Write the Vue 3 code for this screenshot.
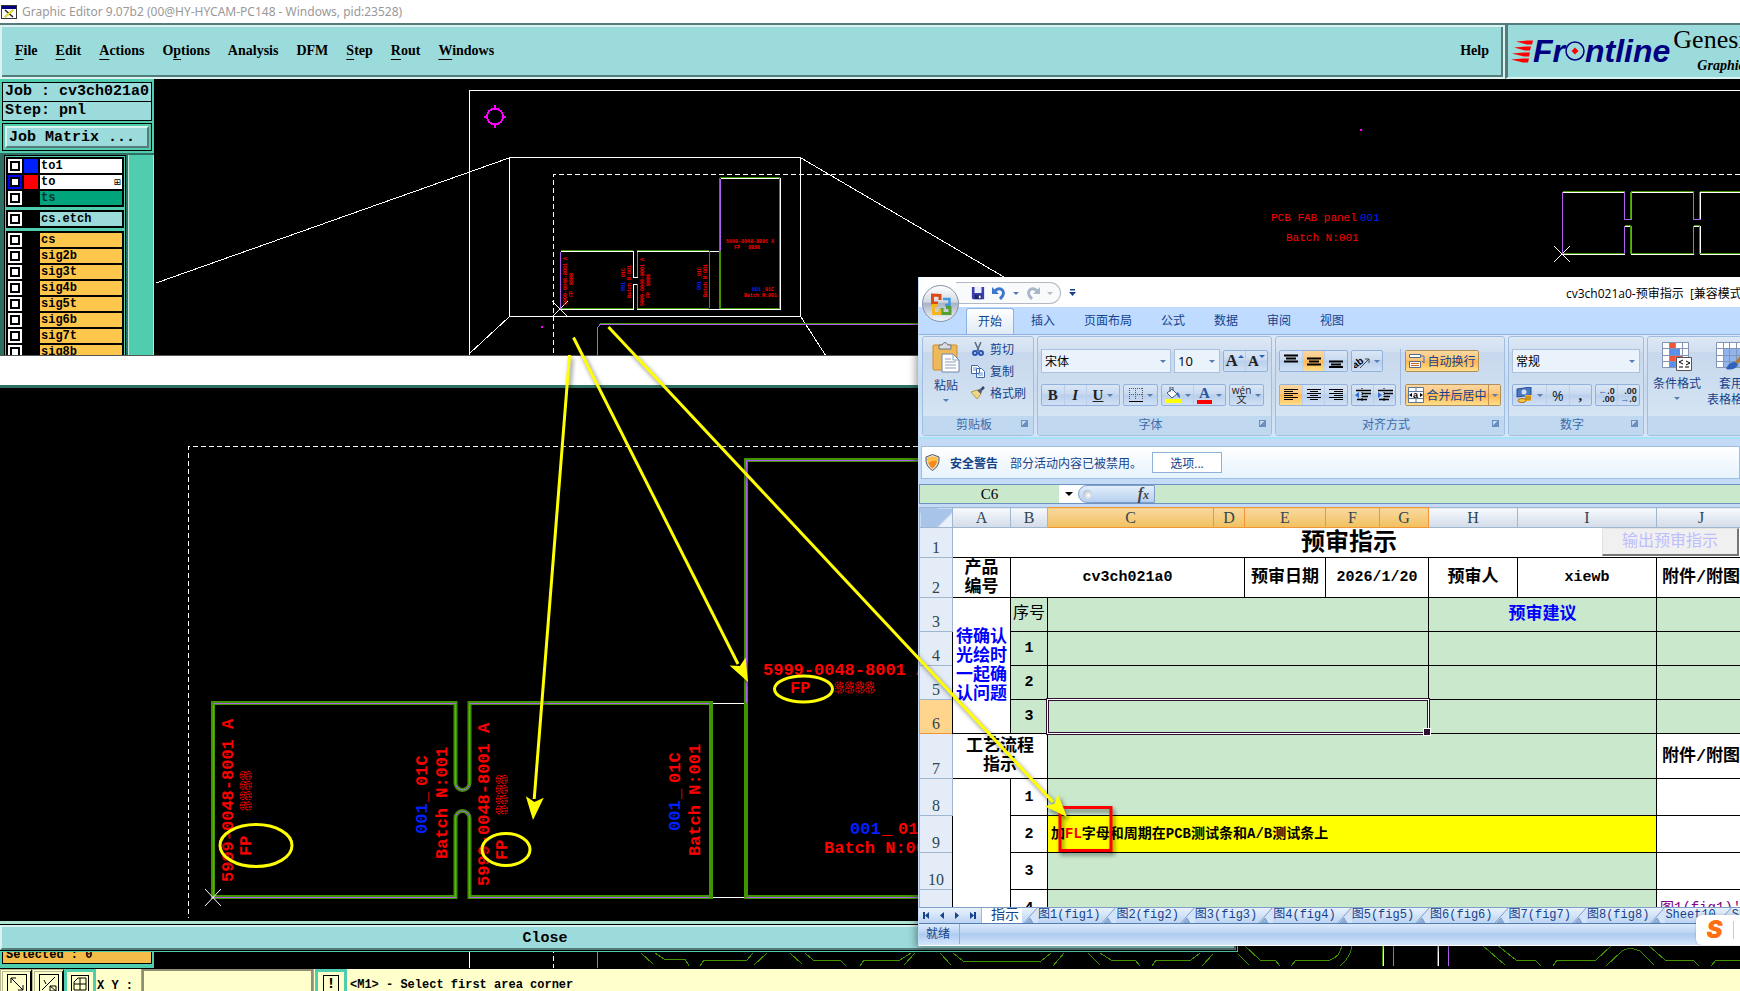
<script setup>
import { ref } from 'vue';

const menus = [
    { key: 'F', rest: 'ile' },
    { key: 'E', rest: 'dit' },
    { key: 'A', rest: 'ctions' },
    { pre: 'O', key: 'p', rest: 'tions' },
    { rest: 'Analysis' },
    { rest: 'DFM' },
    { key: 'S', rest: 'tep' },
    { key: 'R', rest: 'out' },
    { key: 'W', rest: 'indows' },
];

const layerGroups = ref([
    [
        { name: 'to1', type: 'white', color: 'blue' },
        { name: 'to', type: 'white', color: 'red', current: true },
        { name: 'ts', type: 'mask' },
    ],
    [{ name: 'cs.etch', type: 'rout' }],
    [
        { name: 'cs', type: 'signal' },
        { name: 'sig2b', type: 'signal' },
        { name: 'sig3t', type: 'signal' },
        { name: 'sig4b', type: 'signal' },
        { name: 'sig5t', type: 'signal' },
        { name: 'sig6b', type: 'signal' },
        { name: 'sig7t', type: 'signal' },
        { name: 'sig8b', type: 'signal' },
    ],
]);

const bookName = 'cv3ch021a0-预审指示  [兼容模式] - Microsoft Excel';
const ribbonTabs = ['开始', '插入', '页面布局', '公式', '数据', '审阅', '视图'];
const activeTab = ref('开始');

const columns = [
    { name: 'A', cls: 'w-a' },
    { name: 'B', cls: 'w-b' },
    { name: 'C', cls: 'w-c', on: true },
    { name: 'D', cls: 'w-d', on: true },
    { name: 'E', cls: 'w-e', on: true },
    { name: 'F', cls: 'w-f', on: true },
    { name: 'G', cls: 'w-g', on: true },
    { name: 'H', cls: 'w-h' },
    { name: 'I', cls: 'w-i' },
    { name: 'J', cls: 'w-j' },
];

const sheets = ['图1(fig1)', '图2(fig2)', '图3(fig3)', '图4(fig4)', '图5(fig5)', '图6(fig6)', '图7(fig7)', '图8(fig8)', 'Sheet10', 'Sheet11'];

const coord = ref('');
</script>

<template>
    <div class="desktop">
        <!-- Graphic Editor -->
        <div class="titlebar">
            <svg class="app-icon" width="16" height="16" viewBox="0 0 16 16">
                <rect x="0.5" y="1.5" width="15" height="13" fill="#fff" stroke="#333" />
                <rect x="1" y="2" width="14" height="3" fill="#000080" />
                <path d="M4 6l8 7M12 6l-8 7" stroke="#222" stroke-width="1.5" />
                <path d="M4 13l8-7" stroke="#e8e020" stroke-width="2" />
            </svg>
            <span>Graphic Editor 9.07b2 (00@HY-HYCAM-PC148 - Windows, pid:23528)</span>
        </div>
        <header class="header">
            <nav class="menubar">
                <button v-for="m in menus" :key="m.rest" class="menu">{{ m.pre }}<u v-if="m.key">{{ m.key }}</u>{{ m.rest }}</button>
                <button class="menu help">Help</button>
            </nav>
            <div class="brand">
                <div class="logo">
                    <svg class="streaks" width="22" height="24" viewBox="0 0 22 24">
                        <path d="M5 2.500l12-1h5l-1 4h-5zM3 8.500l12-1h5l-1 4h-5zM1 14.500l12-1h6l-1 4h-5zM0 20.500l12-1h6l-1 4h-5z" fill="#f00" />
                    </svg>
                    <span>Fr</span>
                    <svg width="20" height="20" viewBox="0 0 20 20">
                        <circle cx="10" cy="10" r="9" fill="#9cdbdb" stroke="#000080" stroke-width="1.500" />
                        <path d="M10 2v16M2 10h16" stroke="#b9c8d8" />
                        <path d="M10 6.500l3.500 3.500l-3.500 3.500l-3.500-3.500z" fill="#f00" />
                    </svg>
                    <span>ntline</span>
                </div>
                <div class="product">
                    <div class="product-name">Genesis 2000</div>
                    <div class="product-sub">Graphic Editor</div>
                </div>
            </div>
        </header>

        <div class="work">
            <aside class="sidebar">
                <div class="info">
                    <div>Job : cv3ch021a0</div>
                    <div>Step: pnl</div>
                </div>
                <div class="matrix"><button>Job Matrix ...</button></div>
                <div class="layers">
                    <div class="layer-list">
                        <div v-for="(group, i) in layerGroups" :key="i" class="layer-group">
                            <label v-for="layer in group" :key="layer.name" class="layer">
                                <input type="checkbox" :class="{ current: layer.current }">
                                <span class="swatch" :class="layer.color"></span>
                                <span class="layer-name" :class="layer.type">{{ layer.name }}<i v-if="layer.current">⊞</i></span>
                            </label>
                        </div>
                    </div>
                    <div class="scroller"></div>
                </div>
                <div class="selected"><span>Selected : 0</span></div>
            </aside>
            <main class="canvas">
                <svg viewBox="154 79 1586 889" preserveAspectRatio="xMinYMin slice" shape-rendering="crispEdges" fill="none">
                    <g stroke="#fff">
                        <path d="M1740 90.500H469.500V968" />
                        <path d="M509.500 157.500h291v159h-291z" />
                        <path d="M156 283L509 158M801 158L1004 277M509 317L469 354M801 317L826 356" />
                        <path d="M1740 174.500H553.500V968" stroke-dasharray="5 3" />
                        <path d="M561 251.500h72v26h4v-26h83M561 309.500h72v-25h4v25h143.500v-131h-60" />
                        <path d="M552 301l16 16M568 301l-16 16" />
                    </g>
                    <g stroke="#3f9400">
                        <path d="M561 250.500h72M637 250.500h72M561 308.500h72M637 308.500h72M720 177.500h60M720 308.500h60M709.500 251v57M719.500 178v131M720.500 251v58M779.500 178v131" />
                        <path d="M600 323.500H930" />
                    </g>
                    <g stroke="#b060f0">
                        <path d="M560.500 252v57M637.500 252v25M637.500 284v25M720.500 179v72" />
                        <path d="M930 324.500H600L597.500 328V968" />
                    </g>
                    <g fill="#f0f">
                        <rect x="541" y="326" width="2" height="2" />
                        <rect x="1360" y="129" width="2" height="2" />
                    </g>
                    <path d="M495 105v4M495 124v4M484 116.500h4M502 116.500h4" stroke="#f0f" stroke-width="2" />
                    <circle cx="495" cy="116.500" r="8" stroke="#f0f" stroke-width="2" />

                    <!-- coupon texts -->
                    <g class="tiny">
                        <g transform="translate(567 305) rotate(-90)"><text>5999-0048-8001 A</text><text x="8" y="6">FP</text><text x="20" y="6">8888</text></g>
                        <g transform="translate(625 291) rotate(-90)"><text class="no">001</text><text x="11">_01C</text><text x="-7" y="6">Batch N:001</text></g>
                        <g transform="translate(644 306) rotate(-90)"><text>5999-0048-8001 A</text><text x="8" y="6">FP</text><text x="20" y="6">8888</text></g>
                        <g transform="translate(701 290) rotate(-90)"><text class="no">001</text><text x="11">_01C</text><text x="-7" y="6">Batch N:001</text></g>
                        <text x="726" y="243">5999-0048-8001 A</text>
                        <text x="734" y="249">FP</text><text x="748" y="249">8888</text>
                        <text class="no" x="752" y="291">001</text><text x="762" y="291">_01C</text>
                        <text x="744" y="297">Batch N:001</text>
                    </g>
                    <g class="panel-text">
                        <text x="1271" y="221">PCB FAB panel</text>
                        <text x="1360" y="221" class="no">001</text>
                        <text x="1286" y="241">Batch N:001</text>
                    </g>

                    <!-- right coupons -->
                    <g stroke="#fff">
                        <path d="M1563 192.500h62M1631 192.500h63M1700 192.500h40M1563 254.500h62M1631 254.500h63M1700 254.500h40M1625 226.500h6M1694 226.500h6M1700.500 193v27M1700.500 226v28" />
                        <path d="M1554 246l16 16M1570 246l-16 16" />
                    </g>
                    <g stroke="#3f9400">
                        <path d="M1563 191.500h62M1631 191.500h63M1700 191.500h40M1563 253.500h62M1631 253.500h63M1700 253.500h40M1625 225.500h6M1694 225.500h6M1630.500 192v28M1630.500 226v28M1699.500 192v28M1699.500 226v28" />
                    </g>
                    <g stroke="#b060f0">
                        <path d="M1562.500 192v62M1624.500 192v27.500h7V192M1624.500 254v-28M1631.500 254v-28M1693.500 192v27.500h7M1693.500 254v-28" />
                    </g>

                    <!-- traces along the lower edge -->
                    <g stroke="#3f9400">
                        <path d="M641 953l12 11M655 953l9 6h21l4 7M700 966l4-6h43l6-7M767 953l-13 12M790 953l12 11M805 953l8 7h27l6 6M860 966l4-6h36l11-7M915 953l-11 12" />
                        <path d="M940 953l11 12M953 953l10 8h78l10-8M1064 953l-11 13M1088 953l12 12M1100 953l11 7h24l5 6M1152 966l4-6h35l9-7M1213 954l-11 12M1238 954l11 11M1244 945l16 15h15l5 6M1291 966l5-6h34q10-3 12-15" />
                        <path d="M1352 945q-1 12-12 21M1482 945l23 20M1497 945l19 15h19l6 6M1553 966l4-6h39l16-15M1606 966l16-15q8-5 18 0l14 14M1648 945l17 15h28l6 6M1711 966l5-6h24M1382.500 940v26M1437.500 940v26" />
                    </g>
                    <path d="M1383.500 940v26M1438.500 940v26" stroke="#fff" />
                    <path d="M1393.500 940v26M1448.500 940v26" stroke="#b060f0" />
                </svg>
            </main>
        </div>

        <footer class="status">
            <button class="tool" aria-label="Measure">
                <svg width="20" height="20" viewBox="0 0 20 20"><rect x="0.500" y="0.500" width="19" height="19" /><path d="M4 4l12 12M4 9V4h5M11 16h5v-5" /></svg>
            </button>
            <button class="tool" aria-label="Units">
                <svg width="20" height="20" viewBox="0 0 20 20"><rect x="0.500" y="0.500" width="19" height="19" /><path d="M3 16L16 3M5 6l2 4M11 12h6v5h-6zM11 12l6 5" /></svg>
            </button>
            <button class="tool teal" aria-label="Grid">
                <svg width="18" height="18" viewBox="0 0 18 18"><rect x="0.500" y="0.500" width="17" height="17" /><path d="M3 15V7l4-4h8v12zM3 9h12M9 3v12" /></svg>
            </button>
            <label class="xy" for="xy">X Y :</label>
            <input id="xy" v-model="coord" type="text">
            <button class="tool teal alert" aria-label="Alert"><span>!</span></button>
            <span class="hint">&lt;M1&gt; - Select first area corner</span>
        </footer>

        <!-- zoom window -->
        <section class="popup">
            <div class="popup-gap"></div>
            <div class="popup-view">
                <svg viewBox="0 388 1238 533" preserveAspectRatio="xMinYMin slice" fill="none">
                    <path d="M1238 446.500H188.500V918" stroke="#fff" stroke-dasharray="5 3" shape-rendering="crispEdges" />
                    <path d="M711 703.500h35M711 897.500h35" stroke="#fff" shape-rendering="crispEdges" />
                    <path d="M213 703H455.500V783a7 7 0 0 0 14 0V703H711V897H469.500V818a7 7 0 0 0 -14 0V897H213z" stroke="#3f9400" stroke-width="4" />
                    <path d="M1238 460H746V897H1238" stroke="#3f9400" stroke-width="4" />
                    <path d="M710 703.500H469.500V783a7 7 0 0 1 -14 0V703.500H213.500V897.500H455.500V818a7 7 0 0 1 14 0V897.500H710" stroke="#b060f0" />
                    <path d="M1238 460.500H746.500V703M746 897.500H1238" stroke="#b060f0" />
                    <path d="M205 889l16 17M221 889l-16 17" stroke="#fff" />
                    <g class="board-text">
                        <g transform="translate(233 882) rotate(-90)"><text>5999-0048-8001 A</text><text x="26" y="18">FP</text><text class="dotted" x="71" y="18">8888</text></g>
                        <g transform="translate(427 834) rotate(-90)"><text class="no">001</text><text x="32">_</text><text x="48">01C</text><text x="-25" y="20">Batch N:001</text></g>
                        <g transform="translate(489 886) rotate(-90)"><text>5999-0048-8001 A</text><text x="26" y="18">FP</text><text class="dotted" x="71" y="18">8888</text></g>
                        <g transform="translate(680 831) rotate(-90)"><text class="no">001</text><text x="32">_</text><text x="48">01C</text><text x="-25" y="20">Batch N:001</text></g>
                        <text x="763" y="675">5999-0048-8001 A</text>
                        <text x="790" y="693">FP</text><text class="dotted" x="834" y="693">8888</text>
                        <text class="no" x="850" y="834">001</text><text x="882" y="834">_</text><text x="898" y="834">01C</text>
                        <text x="824" y="853">Batch N:001</text>
                    </g>
                </svg>
            </div>
            <button class="close">Close</button>
        </section>

        <!-- Excel -->
        <section class="excel">
            <div class="x-title">
                <button class="orb" aria-label="Office">
                    <svg width="22" height="24" viewBox="0 0 22 24" fill="none" stroke-width="3">
                        <path d="M10 8V3.500L2.500 3V11H8" stroke="#dd4a12" />
                        <path d="M13 7h6.500v6H15" stroke="#3f97e0" stroke-width="2.500" />
                        <path d="M12 16v5.500h8V15.500h-4" stroke="#55a030" />
                        <path d="M8 13.500H3.500v8H10V17" stroke="#f5b51d" />
                    </svg>
                </button>
                <div class="qat">
                    <svg width="14" height="14" viewBox="0 0 16 16"><path d="M1 1h14v14H2l-1-1z" fill="#3a3fb0" /><path d="M4 1h8v7H4z" fill="#e9eefa" /><path d="M4 10h8v5H4z" fill="#23276e" /><path d="M9 11h2v3H9z" fill="#fff" /></svg>
                    <svg width="14" height="14" viewBox="0 0 14 14" fill="none"><path d="M3 5c5-6 13 1 5 8" stroke="#3d76cf" stroke-width="3" /><path d="M0 1v7h7z" fill="#3d76cf" /></svg>
                    <i class="caret"></i>
                    <svg width="14" height="14" viewBox="0 0 14 14" fill="none"><path d="M11 5C6-1-2 6 6 13" stroke="#aab7c9" stroke-width="3" /><path d="M14 1v7H7z" fill="#aab7c9" /></svg>
                    <i class="caret dim"></i>
                </div>
                <svg class="qat-more" width="7" height="8" viewBox="0 0 7 8"><path d="M1 0h5v1.500H1zM0 3h7L3.500 7z" fill="#15428b" /></svg>
                <span class="x-name">{{ bookName }}</span>
            </div>
            <nav class="x-tabs">
                <button v-for="t in ribbonTabs" :key="t" :class="{ active: activeTab === t }" @click="activeTab = t">{{ t }}</button>
            </nav>

            <div class="ribbon">
                <div class="group">
                    <div class="group-body clip">
                        <button class="big">
                            <svg width="28" height="31" viewBox="0 0 28 31">
                                <rect x="1" y="3" width="24" height="25" rx="1" fill="#eeb95b" stroke="#c98f2e" />
                                <path d="M7 3h3q3-5 6 0h3v4H7z" fill="#d9dde3" stroke="#6d747d" />
                                <path d="M10 12h11l6 6v12H10z" fill="#fff" stroke="#6f86a8" />
                                <path d="M21 12v6h6M13 17h6M13 20h11M13 23h11M13 26h11" stroke="#8ba0bf" fill="none" />
                            </svg>
                            <span>粘贴</span>
                            <i class="caret"></i>
                        </button>
                        <div class="stack">
                            <button><svg width="14" height="14" viewBox="0 0 14 14" fill="none"><path d="M4 0l4 9M10 0L6 9" stroke="#5b6b86" stroke-width="1.500" /><circle cx="4" cy="11" r="2" stroke="#2a55b5" stroke-width="2" /><circle cx="10" cy="11" r="2" stroke="#2a55b5" stroke-width="2" /></svg>剪切</button>
                            <button><svg width="14" height="14" viewBox="0 0 14 14"><path d="M0.500 1.500h6l2 2v6h-8zM5.500 4.500h5l3 3v6h-8z" fill="#fff" stroke="#3c66b0" /><path d="M2 4h4M2 6h3M7 9h5M7 11h5" stroke="#6d92cf" /></svg>复制</button>
                            <button><svg width="14" height="14" viewBox="0 0 14 14"><path d="M0 6l6-2 4 4-4 5z" fill="#ecd689" stroke="#b59b45" /><path d="M6 4l3-1 2 2-1 3z" fill="#4d5c77" /><path d="M10 4l3-3" stroke="#3a4762" stroke-width="2.500" /></svg>格式刷</button>
                        </div>
                    </div>
                    <div class="group-name">剪贴板<i class="launch"></i></div>
                </div>

                <div class="group">
                    <div class="group-body rows">
                        <div class="row">
                            <select class="font-name" aria-label="字体"><option>宋体</option></select>
                            <select class="font-size" aria-label="字号"><option>10</option></select>
                            <div class="btns push">
                                <button class="serif"><b class="grow">A</b><i class="up"></i></button>
                                <button class="serif"><b>A</b><i class="down"></i></button>
                            </div>
                        </div>
                        <div class="row">
                            <div class="btns biu">
                                <button class="serif"><b>B</b></button>
                                <button class="serif"><b><em>I</em></b></button>
                                <button class="serif wide"><b><u>U</u></b><i class="caret"></i></button>
                            </div>
                            <div class="btns">
                                <button class="wide"><svg width="14" height="14" viewBox="0 0 14 14"><path d="M0.500 0v12M6.500 0v12M13.500 0v12M0 0.500h14M0 6.500h14" stroke="#555" stroke-dasharray="1 1" /><path d="M0 13.500h14" stroke="#000" /></svg><i class="caret"></i></button>
                            </div>
                            <div class="btns fill">
                                <button><svg width="16" height="16" viewBox="0 0 16 16"><path d="M2 6l5-4 5 5-5 4z" fill="#fff" stroke="#46597c" /><path d="M5 5V0h3v4" fill="none" stroke="#46597c" /><path d="M12 5q3 1 3 6q-3-1-3-3z" fill="#3f6fc4" /><path d="M0 12h16v4H0z" fill="#ff0" /></svg><i class="caret"></i></button>
                                <button class="serif"><span class="font-color">A</span><i class="caret"></i></button>
                            </div>
                            <div class="btns">
                                <button class="wide wen"><span>wén<br>文</span><i class="caret"></i></button>
                            </div>
                        </div>
                    </div>
                    <div class="group-name">字体<i class="launch"></i></div>
                </div>

                <div class="group">
                    <div class="group-body align">
                        <div class="rows">
                            <div class="row">
                                <div class="btns three">
                                    <button aria-label="top"><svg width="14" height="14" viewBox="0 0 14 14"><path d="M0 1.500h14M2 4.500h10M0 7.500h14" stroke="#000" stroke-width="2" /></svg></button>
                                    <button aria-label="middle" class="on"><svg width="14" height="14" viewBox="0 0 14 14"><path d="M0 4.500h14M2 7.500h10M0 10.500h14" stroke="#000" stroke-width="2" /></svg></button>
                                    <button aria-label="bottom"><svg width="14" height="14" viewBox="0 0 14 14"><path d="M0 7.500h14M2 10.500h10M0 13h14" stroke="#000" stroke-width="2" /></svg></button>
                                </div>
                                <div class="btns"><button class="orient"><svg width="16" height="14" viewBox="0 0 16 14"><text x="-2" y="12" transform="rotate(-38 4 9)" font-family="Liberation Sans" font-size="10" font-weight="bold">ab</text><path d="M6 14l9-9M15 9V5h-4" fill="none" stroke="#444" /></svg><i class="caret"></i></button></div>
                            </div>
                            <div class="row">
                                <div class="btns three">
                                    <button aria-label="left" class="on"><svg width="14" height="14" viewBox="0 0 14 14"><path d="M0 1.500h14M0 3.500h9M0 5.500h14M0 7.500h9M0 9.500h14M0 11.500h9" stroke="#000" /></svg></button>
                                    <button aria-label="center"><svg width="14" height="14" viewBox="0 0 14 14"><path d="M0 1.500h14M3 3.500h8M0 5.500h14M3 7.500h8M0 9.500h14M3 11.500h8" stroke="#000" /></svg></button>
                                    <button aria-label="right"><svg width="14" height="14" viewBox="0 0 14 14"><path d="M0 1.500h14M5 3.500h9M0 5.500h14M5 7.500h9M0 9.500h14M5 11.500h9" stroke="#000" /></svg></button>
                                </div>
                                <div class="btns two">
                                    <button aria-label="outdent"><svg width="16" height="14" viewBox="0 0 16 14"><path d="M1 2.500h15M7 5.500h9M7 8.500h6M2 11.500h10" stroke="#000" stroke-width="1.500" /><path d="M7 0v14" stroke="#000" stroke-dasharray="1 1" /><path d="M0 7l4-3v6z" fill="#2f6ad0" /></svg></button>
                                    <button aria-label="indent"><svg width="16" height="14" viewBox="0 0 16 14"><path d="M1 2.500h15M7 5.500h9M7 8.500h6M2 11.500h10" stroke="#000" stroke-width="1.500" /><path d="M7 0v14" stroke="#000" stroke-dasharray="1 1" /><path d="M5 7L1 4v6z" fill="#2f6ad0" /></svg></button>
                                </div>
                            </div>
                        </div>
                        <div class="sep"></div>
                        <div class="rows">
                            <div class="row">
                                <div class="btns hot"><button class="on wrap"><svg width="16" height="16" viewBox="0 0 16 16"><path d="M0.500 1.500h11v3h-11zM0.500 8.500h11v6h-11z" fill="#fff" stroke="#5a6b88" /><path d="M2 10.500h8M2 12.500h8" stroke="#c96a22" /><path d="M12 3h3v7M13 8l2 2" fill="none" stroke="#3f6fc4" /></svg>自动换行</button></div>
                            </div>
                            <div class="row">
                                <div class="btns hot merge"><button class="on"><svg width="16" height="16" viewBox="0 0 16 16"><path d="M0.500 0.500h15v15h-15zM0 4.500h16M0 11.500h16M8 0v4M8 12v4" fill="#fff" stroke="#5d7599" /><path d="M1 8l3-2v4zM15 8l-3-2v4z" fill="#000" /><text x="5" y="11" font-family="Liberation Sans" font-size="9" font-weight="bold">a</text></svg>合并后居中</button><button class="on drop" aria-label="更多"><i class="caret"></i></button></div>
                            </div>
                        </div>
                    </div>
                    <div class="group-name">对齐方式<i class="launch"></i></div>
                </div>

                <div class="group">
                    <div class="group-body rows">
                        <div class="row"><select class="num-format" aria-label="数字格式"><option>常规</option></select></div>
                        <div class="row">
                            <div class="btns number">
                                <button class="wide"><svg width="17" height="16" viewBox="0 0 17 16"><path d="M1 2l14-2v8L1 10z" fill="#4b78c2" stroke="#2b4d8c" /><circle cx="8" cy="5" r="2.500" fill="#cfe0f7" /><path d="M9 8h6v6H9z" fill="#f0b52d" /><path d="M9 10h6M9 12h6" stroke="#a87010" /><ellipse cx="6" cy="13.500" rx="4" ry="2" fill="#f5c84c" stroke="#a87010" /></svg><i class="caret"></i></button>
                                <button class="percent">%</button>
                                <button class="serif comma"><b>,</b></button>
                            </div>
                            <div class="btns two">
                                <button class="dec"><span><em>←</em>.0<br>.00</span></button>
                                <button class="dec"><span>.00<br><em>→</em>.0</span></button>
                            </div>
                        </div>
                    </div>
                    <div class="group-name">数字<i class="launch"></i></div>
                </div>

                <div class="group last">
                    <div class="group-body clip">
                        <button class="big fmt">
                            <svg width="30" height="29" viewBox="0 0 30 29">
                                <path d="M1 1h26v25H1z" fill="#fff" />
                                <path d="M7 1h7v6H7zM7 14h13v6H7z" fill="#f0553c" /><path d="M7 7h11v6H7zM7 20h6v6H7z" fill="#5b8ee8" />
                                <path d="M0.500 0.500h26v25h-26zM0 6.500h27M0 13.500h27M0 19.500h27M7.500 0v26M13.500 0v26M20.500 0v26" fill="none" stroke="#8394b5" />
                                <path d="M14.500 15.500h15v13h-15z" fill="#fff" stroke="#555" />
                                <path d="M21 18l-4 2 4 2M17 25h4M24 19l4 2-4 2M23 25h4" stroke="#000" fill="none" />
                            </svg>
                            <span>条件格式</span>
                            <i class="caret"></i>
                        </button>
                        <button class="big fmt">
                            <svg width="30" height="29" viewBox="0 0 30 29">
                                <path d="M0 0h27v25H0z" fill="#fff" /><path d="M7 6h20v19H7z" fill="#8fb4ee" />
                                <path d="M0.500 0.500h26v25h-26zM0 6.500h27M0 13.500h27M0 19.500h27M7.500 0v26M13.500 0v26M20.500 0v26" fill="none" stroke="#8394b5" />
                                <path d="M10 27q3-8 10-7l2 3q-4 6-12 4z" fill="#2f62b8" /><path d="M19 20l9-11 2 2-8 11z" fill="#b07a3a" />
                            </svg>
                            <span>套用<br>表格格式</span>
                        </button>
                    </div>
                    <div class="group-name"></div>
                </div>
            </div>

            <div class="warning">
                <svg width="15" height="17" viewBox="0 0 15 17"><path d="M7.500 0.500L14 3q1 9-6.500 13.500Q0 12 1 3z" fill="#e9e3da" stroke="#555" /><path d="M7.500 2.500L12.500 4q0 7-5 10.500Q2.500 11 2.500 4z" fill="#f58a1c" /><path d="M7.500 2.500L12.500 4v3q-6-1-9 2-1-2-1-5z" fill="#fbc04a" /></svg>
                <b>安全警告</b>
                <span>部分活动内容已被禁用。</span>
                <button>选项...</button>
            </div>

            <div class="formula">
                <input class="name-box" value="C6" aria-label="名称框">
                <button class="name-drop" aria-label="名称列表"><i class="caret black"></i></button>
                <div class="fx"><i class="knob"></i><span>f<small>x</small></span></div>
                <input class="fx-input" aria-label="编辑栏">
            </div>

            <div class="grid">
                <table>
                    <colgroup>
                        <col class="w-n">
                        <col v-for="c in columns" :key="c.name" :class="c.cls">
                    </colgroup>
                    <thead>
                        <tr>
                            <th class="corner"></th>
                            <th v-for="c in columns" :key="c.name" :class="{ on: c.on }">{{ c.name }}</th>
                        </tr>
                    </thead>
                    <tbody>
                        <tr class="h-30">
                            <th>1</th>
                            <td colspan="10" class="sheet-title">预审指示<button class="export">输出预审指示</button></td>
                        </tr>
                        <tr class="h-40">
                            <th>2</th>
                            <td>产品<br>编号</td>
                            <td colspan="3" class="latin">cv3ch021a0</td>
                            <td>预审日期</td>
                            <td colspan="2" class="latin">2026/1/20</td>
                            <td>预审人</td>
                            <td class="latin">xiewb</td>
                            <td class="attach">附件/附图</td>
                        </tr>
                        <tr class="h-34">
                            <th>3</th>
                            <td rowspan="4" class="ask">待确认<br>光绘时<br>一起确<br>认问题</td>
                            <td class="green plain">序号</td>
                            <td colspan="5" class="green"></td>
                            <td colspan="2" class="green ask">预审建议</td>
                            <td class="green"></td>
                        </tr>
                        <tr v-for="n in 3" :key="n" class="h-34">
                            <th :class="{ on: n === 3 }">{{ n + 3 }}</th>
                            <td class="green latin">{{ n }}</td>
                            <td colspan="5" class="green"><div v-if="n === 3" class="cursor"></div></td>
                            <td colspan="2" class="green"></td>
                            <td class="green"></td>
                        </tr>
                        <tr class="h-45">
                            <th>7</th>
                            <td colspan="2">工艺流程<br>指示</td>
                            <td colspan="7" class="green"></td>
                            <td class="attach">附件/附图</td>
                        </tr>
                        <tr class="h-37">
                            <th>8</th>
                            <td rowspan="4"></td>
                            <td class="latin">1</td>
                            <td colspan="7" class="green"></td>
                            <td></td>
                        </tr>
                        <tr class="h-37">
                            <th>9</th>
                            <td class="latin">2</td>
                            <td colspan="7" class="note">加<span>FL</span>字母和周期在PCB测试条和A/B测试条上</td>
                            <td></td>
                        </tr>
                        <tr class="h-37">
                            <th>10</th>
                            <td class="latin">3</td>
                            <td colspan="7" class="green"></td>
                            <td></td>
                        </tr>
                        <tr class="h-37">
                            <th></th>
                            <td class="latin">4</td>
                            <td colspan="7" class="green"></td>
                            <td class="fig">图1(fig1)'</td>
                        </tr>
                    </tbody>
                </table>
            </div>

            <div class="sheets">
                <div class="nav">
                    <svg width="56" height="9" viewBox="0 0 56 9" fill="#15428b"><path d="M1 1h2v7H1zM7 1v7L3 4.500zM22 1v7l-4-3.500zM33 1v7l4-3.500zM48 1v7l4-3.500zM52 1h2v7h-2z" /></svg>
                </div>
                <button class="sheet current">指示</button>
                <button v-for="s in sheets" :key="s" class="sheet">
                    <svg width="16" height="16" viewBox="0 0 16 16"><path d="M16 0h-1L3 15.500h13z" fill="#d3e4fa" /><path d="M15 0L2 15M4 15l4-5 3 5z" fill="#8fb0dc" stroke="#7f9fc9" /></svg>{{ s }}
                </button>
            </div>
            <div class="x-status"><span>就绪</span></div>
        </section>

        <div class="ime"><b>S</b></div>

        <!-- markup over both windows -->
        <svg class="markup" viewBox="0 0 1740 991" preserveAspectRatio="xMinYMin slice" fill="none">
            <defs>
                <marker id="head" markerUnits="userSpaceOnUse" markerWidth="26" markerHeight="20" refX="24" refY="9" orient="auto">
                    <path d="M24 9L1 0L6 9L1 18z" fill="#ff0" />
                </marker>
            </defs>
            <path d="M1060 807.500h51v43h-51z" stroke="#f00" stroke-width="3" />
            <g stroke="#ff0" stroke-width="3">
                <path d="M569.500 355L534.200 799" />
                <path d="M573.500 337.500L738 664" />
                <path d="M608.500 327L1053 802" />
                <ellipse cx="256" cy="845.500" rx="36" ry="21" />
                <ellipse cx="506" cy="849.500" rx="24" ry="16" />
                <ellipse cx="803.500" cy="689" rx="29" ry="13" />
            </g>
            <g>
                <path d="M569.500 355L533 820" marker-end="url(#head)" />
                <path d="M573.500 337.500L748 682" marker-end="url(#head)" />
                <path d="M608.500 327L1067 817" marker-end="url(#head)" />
            </g>
        </svg>
    </div>
</template>

<style>
body {
    margin: 0;
    overflow: hidden;
    background: #000;
}
</style>

<style scoped>
.desktop {
    position: relative;
    display: flex;
    flex-direction: column;
    height: 100vh;
    overflow: hidden;
    background: #000;
    font-family: "Liberation Mono", monospace;
}
.desktop * {
    box-sizing: border-box;
}
button, input, select {
    margin: 0;
    padding: 0;
    border: 0;
    border-radius: 0;
    background: none;
    color: inherit;
    font: inherit;
    appearance: none;
    outline: 0;
}

/* ---- Graphic Editor ---- */
.titlebar {
    display: flex;
    align-items: center;
    gap: 5px;
    height: 23px;
    padding-left: 1px;
    background: #fff;
    color: #999;
    font: 12px "Noto Sans", sans-serif;
}
.header {
    display: flex;
    height: 56px;
    border-top: 2px solid #567b7b;
    background: #9cdbdb;
}
.menubar {
    flex: 1;
    display: flex;
    align-items: center;
    gap: 18px;
    padding: 0 14px 2px 13px;
    border: 2px solid #d8f3f0;
    box-shadow: inset -2px -2px #567b7b;
    font: bold 14px "Liberation Serif", serif;
}
.menu u {
    text-underline-offset: 4px;
}
.help {
    margin-left: auto;
}
.brand {
    display: flex;
    flex: 0 0 235px;
    gap: 3px;
    padding-left: 3px;
    overflow: hidden;
    border-left: 3px solid #567b7b;
    border-bottom: 2px solid #d8f3f0;
    white-space: nowrap;
}
.logo {
    display: flex;
    align-items: center;
    height: 52px;
    color: #000080;
    font: italic bold 32px "Liberation Sans", sans-serif;
}
.product-name {
    padding-top: 2px;
    font: 26px/26px "Liberation Serif", serif;
}
.product-sub {
    padding: 5px 0 0 24px;
    font: italic bold 14px "Liberation Serif", serif;
}
.work {
    flex: 1;
    display: flex;
    min-height: 0;
}
.sidebar {
    display: flex;
    flex-direction: column;
    flex: 0 0 154px;
    padding-top: 3px;
    background: #50ccae;
    font-size: 15px;
    font-weight: bold;
}
.info, .matrix {
    margin: 0 2px 2px;
    border: 1px solid #000;
}
.info div {
    height: 18px;
    padding-left: 2px;
    background: #9cdbdb;
    line-height: 18px;
    white-space: nowrap;
}
.info div + div {
    height: 19px;
    border-top: 1px solid #000;
}
.matrix {
    padding: 2px;
}
.matrix button {
    display: block;
    width: 100%;
    height: 22px;
    padding-left: 2px;
    border: 2px solid;
    border-color: #d8f3f0 #567b7b #567b7b #d8f3f0;
    background: #9cdbdb;
    text-align: left;
}
.layers {
    flex: 1;
    display: flex;
    gap: 2px;
    min-height: 0;
    padding-left: 4px;
    border-top: 2px solid #2e6f63;
    background: #2e6f63;
    overflow: hidden;
}
.layer-list {
    flex: 1;
    display: flex;
    flex-direction: column;
    gap: 3px;
    padding: 1px;
    border: 1px solid #000;
    background: #50ccae;
}
.layer-group {
    display: flex;
    flex-direction: column;
    gap: 2px;
    padding: 2px;
    background: #000;
}
.layer {
    display: flex;
    gap: 2px;
    height: 14px;
    font-size: 12px;
    line-height: 14px;
}
.layer input {
    width: 14px;
    height: 14px;
    border: 2px solid #fff;
    background: #fff;
    box-shadow: inset 0 0 0 2px #000;
}
.layer input.current {
    border-color: #00f;
}
.swatch {
    width: 14px;
}
.swatch.blue { background: #0020ff; }
.swatch.red { background: #f00; }
.layer-name {
    flex: 1;
    display: flex;
    justify-content: space-between;
    padding: 0 1px;
    color: #000;
}
.layer-name i {
    font: 9px/14px "DejaVu Sans", sans-serif;
}
.layer-name.white { background: #fff; }
.layer-name.mask { background: #00a57c; color: #033; }
.layer-name.rout { background: #9cdbdb; }
.layer-name.signal { background: #ffc64c; }
.scroller {
    width: 26px;
    border-left: 1px solid #b5ead9;
    border-right: 1px solid #b5ead9;
    background: #50ccae;
}
.selected {
    height: 29px;
    padding: 0 2px 2px;
    font-size: 12px;
}
.selected span {
    display: block;
    height: 25px;
    padding-left: 3px;
    border: 1px solid #000;
    background: #f5bc4a;
    line-height: 30px;
}
.canvas {
    flex: 1;
    min-width: 0;
    background: #000;
    overflow: hidden;
}
.canvas svg {
    display: block;
    width: 100%;
    height: 100%;
}
.tiny text { fill: #f00; font: bold 5px "Liberation Mono", monospace; }
.panel-text text { fill: #f00; font: 11px "Liberation Mono", monospace; }
.board-text text { fill: #f00; font: bold 17px "Liberation Mono", monospace; }
.board-text .dotted { fill: none; stroke: #f00; stroke-width: 1; stroke-dasharray: 2 1; }
.canvas .no, .board-text .no { fill: #0020ff; }

.status {
    display: flex;
    height: 23px;
    border-top: 1px solid #000;
    background: #ffc;
    font-size: 12px;
    font-weight: bold;
    overflow: hidden;
}
.tool {
    flex: none;
    width: 32px;
    height: 30px;
    padding: 2px 3px;
    border: 3px double #b8b890;
    border-right: 2px solid #000;
}
.tool svg {
    display: block;
    margin: auto;
    fill: none;
    stroke: #000;
}
.tool.teal {
    border: 3px solid #50ccae;
}
.xy {
    width: 46px;
    padding-left: 1px;
    line-height: 34px;
    white-space: nowrap;
}
.status input {
    width: 171px;
    height: 30px;
    padding: 0 5px;
    border: 2px solid #8f8f72;
    box-shadow: 0 0 0 1px #50ccae;
}
.alert {
    margin-left: 2px;
}
.alert span {
    display: block;
    width: 16px;
    margin: auto;
    border: 1px solid #000;
    font-size: 15px;
}
.hint {
    padding-left: 3px;
    line-height: 32px;
}

/* ---- zoom window ---- */
.popup {
    position: absolute;
    left: 0;
    top: 355px;
    bottom: 39px;
    width: 1238px;
    display: flex;
    flex-direction: column;
    border-right: 2px solid #50ccae;
    background: #50ccae;
}
.popup-gap {
    height: 33px;
    border-top: 1px solid #555;
    border-bottom: 3px solid #2e6f63;
    background: #fff;
}
.popup-view {
    flex: 1;
    min-height: 0;
    background: #000;
    border-bottom: 3px solid #aee6d6;
}
.popup-view svg {
    display: block;
    width: 1238px;
    height: 100%;
}
.close {
    height: 25px;
    margin: 1px 0 2px;
    padding: 2px 146px 0 0;
    border: 2px solid;
    border-color: #d8f3f0 #567b7b #567b7b #d8f3f0;
    outline: 1px solid #000;
    background: #9cdbdb;
    font-size: 15px;
    font-weight: bold;
}

/* ---- Excel ---- */
.excel {
    position: absolute;
    left: 918px;
    right: 0;
    top: 277px;
    bottom: 45px;
    display: flex;
    flex-direction: column;
    padding-left: 1px;
    overflow: hidden;
    background: #c4dbf8;
    box-shadow: -2px 2px 8px rgba(0, 0, 0, .4);
    color: #15428b;
    font: 12px "Open Sans", "Noto Sans CJK SC", sans-serif;
}
.x-title {
    position: relative;
    display: flex;
    align-items: center;
    flex: none;
    height: 30px;
    padding: 2px 0 0 37px;
    background: #fff;
}
.orb {
    position: absolute;
    left: 3px;
    top: 8px;
    z-index: 1;
    display: flex;
    align-items: center;
    justify-content: center;
    width: 37px;
    height: 37px;
    border: 1px solid #8493a8;
    border-radius: 50%;
    background: linear-gradient(#fff, #d3dae4 45%, #aab5c6 50%, #f4f7fb);
}
.qat {
    display: flex;
    align-items: center;
    gap: 7px;
    width: 105px;
    height: 22px;
    padding-left: 15px;
    border: 1px solid #b4bac4;
    border-left: 0;
    border-radius: 0 11px 11px 0;
    background: #f8fafc;
}
.qat-more {
    margin-left: 8px;
}
.caret {
    display: inline-block;
    flex: none;
    width: 0;
    border: 3px solid transparent;
    border-top-color: #567db1;
    border-bottom: 0;
}
.caret.dim { border-top-color: #b5bcc8; }
.caret.black { border-top-color: #000; border-width: 4px 4px 0; }
.x-name {
    flex: 0 0 174px;
    margin-left: auto;
    overflow: hidden;
    color: #000;
    white-space: pre;
}
.x-tabs {
    display: flex;
    flex: none;
    gap: 5px;
    height: 27px;
    padding: 1px 0 0 47px;
    background: #bfdbff;
}
.x-tabs button {
    padding: 0 12px;
    line-height: 24px;
}
.x-tabs .active {
    border: 1px solid #8db2e3;
    border-bottom: 0;
    border-radius: 3px 3px 0 0;
    padding: 0 11px;
    background: linear-gradient(#fff, #e0eaf6);
}
.ribbon {
    display: flex;
    flex: none;
    gap: 3px;
    height: 105px;
    padding: 1px 3px;
    border-top: 1px solid #8db2e3;
    border-bottom: 2px solid #a5e3f5;
    background: linear-gradient(#dde8f5, #c9daee 50%, #d6e5f7);
    overflow: hidden;
}
.group {
    display: flex;
    flex-direction: column;
    flex: none;
    border: 1px solid #a0bfe0;
    border-radius: 3px;
    background: linear-gradient(#dee8f5, #d1dff0 15%, #c7d8ed 16%, #d8e8f5);
}
.group.last {
    width: 200px;
}
.group-body {
    flex: 1;
}
.group-name {
    position: relative;
    height: 19px;
    padding-right: 8px;
    background: #c1d8f1;
    color: #3e6aaa;
    line-height: 18px;
    text-align: center;
}
.launch {
    position: absolute;
    right: 5px;
    top: 4px;
    width: 7px;
    height: 7px;
    border: 1px solid #6c8fc0;
    background: linear-gradient(135deg, transparent 45%, #6c8fc0 46%);
}
.clip {
    display: flex;
    padding: 5px 3px 0 5px;
}
.big {
    display: flex;
    flex-direction: column;
    align-items: center;
    gap: 5px;
    width: 36px;
    line-height: 16px;
}
.big.fmt {
    width: 54px;
    white-space: nowrap;
}
.group.last .clip {
    padding-left: 2px;
}
.stack {
    display: flex;
    flex-direction: column;
    padding: 0 4px 0 7px;
    margin-top: -4px;
}
.stack button {
    display: flex;
    align-items: center;
    gap: 5px;
    height: 22px;
}
.rows {
    display: flex;
    flex-direction: column;
    gap: 10px;
    padding: 12px 3px 0;
}
.align {
    display: flex;
    padding: 0 3px;
}
.align .rows {
    padding: 12px 0 0;
}
.sep {
    width: 1px;
    height: 56px;
    margin: 12px 4px 0;
    background: #9ebbdf;
}
.row {
    display: flex;
    align-items: center;
    gap: 3px;
    height: 24px;
}
.row select {
    height: 24px;
    padding: 0 3px;
    border: 1px solid #abc1de;
    background: #eaf2fb url("data:image/svg+xml,%3Csvg xmlns='http://www.w3.org/2000/svg' width='6' height='3'%3E%3Cpath d='M0 0h6L3 3z' fill='%23567db1'/%3E%3C/svg%3E") no-repeat right 4px center;
    color: #000;
}
.row .font-name { width: 130px; }
.row .font-size { width: 46px; font-size: 13px; }
.row .num-format { width: 128px; }
.btns {
    display: flex;
    height: 22px;
    border: 1px solid #92b1dc;
    border-radius: 2px;
    background: linear-gradient(#d9e6f5, #c9daf0 45%, #b9cfec 50%, #cfe0f4);
}
.btns.hot {
    border-color: #b08f5a;
}
.btns button {
    display: flex;
    flex: 1;
    align-items: center;
    justify-content: center;
    gap: 4px;
    color: #222;
}
.btns button + button {
    border-left: 1px solid #b9cfe9;
}
.btns .on {
    background: linear-gradient(#fbd7a0, #fcc577 45%, #ffb54f 50%, #fede8c);
}
.push { width: 45px; }
.biu { width: 79px; }
.btns .wide { flex: 0 0 33px; }
.fill { width: 65px; }
.three { width: 69px; }
.two { width: 45px; }
.number { width: 80px; }
.orient { width: 30px; }
.serif {
    font: 15px "Liberation Serif", serif;
}
.serif .grow { font-size: 17px; }
.push .serif { gap: 0; }
.up, .down {
    align-self: flex-start;
    margin-top: 4px;
    border: 3px solid transparent;
}
.up { border-bottom-color: #2f62b8; border-top: 0; }
.down { border-top-color: #2f62b8; border-bottom: 0; }
.font-color {
    border-bottom: 4px solid #f00;
    padding: 0 2px;
    color: #2c55a0;
    font-weight: bold;
    line-height: 14px;
}
.wen span {
    color: #222;
    font-size: 10px;
    line-height: 9px;
}
.percent {
    font-size: 14px;
}
.btns button.wrap {
    width: 72px;
    gap: 3px;
    padding: 0 2px;
    color: #15428b;
    white-space: nowrap;
}
.merge { width: 96px; }
.btns.merge button {
    gap: 3px;
    color: #15428b;
    white-space: nowrap;
}
.btns.merge .drop {
    flex: 0 0 12px;
    border-color: #c09050;
}
.dec span {
    font: bold 9px/8px "Liberation Sans", sans-serif;
    text-align: right;
}
.dec em {
    color: #2f62b8;
    font-style: normal;
}
.warning {
    display: flex;
    align-items: center;
    flex: none;
    height: 33px;
    margin: 7px 0 5px 2px;
    padding-left: 3px;
    border: 1px solid #a0bfe0;
    background: linear-gradient(#fff, #e6f3fd);
}
.warning b { margin-left: 10px; }
.warning span { margin-left: 12px; }
.warning button {
    width: 70px;
    height: 21px;
    margin-left: 10px;
    border: 1px solid #8fb0d8;
    background: #fff;
}
.formula {
    display: flex;
    flex: none;
    height: 20px;
    margin-bottom: 3px;
    border: 1px solid #6f93c0;
    border-right: 0;
    background: #fff;
    color: #000;
}
.name-box {
    width: 139px;
    background: #c9e8cc;
    font: 15px "Liberation Serif", serif;
    text-align: center;
}
.name-drop {
    display: flex;
    align-items: center;
    justify-content: center;
    width: 19px;
}
.fx {
    display: flex;
    align-items: center;
    justify-content: space-between;
    width: 77px;
    padding: 0 5px 0 4px;
    border: 1px solid #7f9fc9;
    border-radius: 9px 0 0 9px;
    background: linear-gradient(#e4eefb, #b5cff0);
    color: #444;
    font: italic bold 16px "Liberation Serif", serif;
}
.fx small { font-size: 12px; }
.knob {
    width: 9px;
    height: 9px;
    border-radius: 50%;
    background: radial-gradient(circle at 60% 60%, #fff, #9aa8bd);
}
.fx-input {
    flex: 1;
    min-width: 0;
    background: #c9e8cc;
}
.grid {
    flex: 1;
    min-height: 0;
    overflow: hidden;
    background: #fff;
}
table {
    width: 826px;
    table-layout: fixed;
    border-collapse: collapse;
    color: #000;
    font: bold 17px/19px "Liberation Mono", "Noto Sans CJK SC", monospace;
}
.w-n { width: 33px; }
.w-a { width: 58px; }
.w-b { width: 37px; }
.w-c { width: 166px; }
.w-d { width: 31px; }
.w-e { width: 81px; }
.w-f { width: 54px; }
.w-g { width: 49px; }
.w-h { width: 89px; }
.w-i { width: 139px; }
.w-j { width: 89px; }
th, td {
    position: relative;
    padding: 0;
    text-align: center;
    white-space: nowrap;
}
th {
    border: 1px solid #9eb6ce;
    background: #e4ecf7;
    color: #2f4550;
    font: 16px/18px "Liberation Serif", serif;
}
thead th {
    height: 20px;
    background: linear-gradient(#f7fafd, #d3dbe9);
}
thead th.on {
    border-color: #f29536;
    background: linear-gradient(#f9d99f, #f1c15f);
}
thead .corner {
    background: linear-gradient(135deg, transparent 70%, #e9f1fb 71%), #a9c4e9;
}
tbody th {
    vertical-align: bottom;
}
tbody th.on {
    border-color: #f29536;
    background: #ffd58d;
}
td {
    border: 1px solid #000;
    background: #fff;
}
.h-30 { height: 30px; }
.h-34 { height: 34px; }
.h-37 { height: 37px; }
.h-40 { height: 40px; }
.h-45 { height: 45px; }
td.green { background: #c9e8cc; }
td.latin { font-size: 15px; }
td.ask { color: #00f; }
td.plain { font-size: 16px; font-weight: normal; }
td.attach { overflow: hidden; }
td.sheet-title { padding-top: 2px; font-size: 24px; line-height: 24px; }
td.note {
    padding-left: 3px;
    background: #ff0;
    font-size: 14px;
    text-align: left;
}
.note span { color: #f00; }
td.fig {
    padding-left: 3px;
    color: #800080;
    font-size: 14px;
    font-weight: normal;
    text-align: left;
}
.export {
    position: absolute;
    right: 6px;
    top: 0;
    width: 137px;
    height: 28px;
    border: 1px solid #e3e3e3;
    border-right: 2px solid #777;
    border-bottom: 2px solid #777;
    background: #f0f0f0;
    color: #bdbdff;
    font-size: 16px;
    font-weight: normal;
}
.cursor {
    position: absolute;
    inset: -2px;
    z-index: 1;
    border: 1px solid #2e1030;
    box-shadow: inset 0 0 0 1px #fff, inset 0 0 0 2px #2e1030;
}
.cursor::after {
    content: "";
    position: absolute;
    right: -2px;
    bottom: -2px;
    width: 6px;
    height: 6px;
    border: 1px solid #fff;
    background: #2e1030;
}
.sheets {
    display: flex;
    flex: none;
    height: 17px;
    border-top: 1px solid #7f9fc9;
    border-bottom: 1px solid #567db1;
    background: linear-gradient(#e9f2fd, #bcd4f2);
    font: 12px/15px "Liberation Mono", "Noto Sans CJK SC", monospace;
    overflow: hidden;
}
.nav {
    display: flex;
    flex: none;
    align-items: center;
    justify-content: center;
    width: 63px;
    border-right: 1px solid #9ab9e0;
}
.sheet {
    display: flex;
    flex: none;
    white-space: nowrap;
}
.sheet.current {
    padding: 0 3px 0 9px;
    background: #fff;
    font-size: 14px;
}
.x-status {
    display: flex;
    flex: none;
    height: 22px;
    padding-bottom: 1px;
    border-bottom: 1px solid #fff;
    background: linear-gradient(#dbe9fb, #c2d8f5 35%, #aecbf0 50%, #d5e6fb);
    line-height: 19px;
}
.x-status span {
    padding: 0 9px 0 7px;
    border-right: 1px solid #8fb0dc;
}

.ime {
    position: absolute;
    right: -4px;
    bottom: 46px;
    width: 48px;
    height: 30px;
    border-radius: 6px;
    background: #fff;
    box-shadow: 0 0 3px rgba(0, 0, 0, .2);
}
.ime b {
    display: block;
    width: 38px;
    height: 18px;
    margin-top: 6px;
    border-right: 1px solid #ccc;
    color: #ff7010;
    font: italic 900 24px/18px "Inter", sans-serif;
    text-align: center;
}
.markup {
    position: absolute;
    inset: 0;
    width: 100%;
    height: 100%;
    pointer-events: none;
    filter: drop-shadow(2px 3px 2px rgba(0, 0, 0, .5));
}
</style>
